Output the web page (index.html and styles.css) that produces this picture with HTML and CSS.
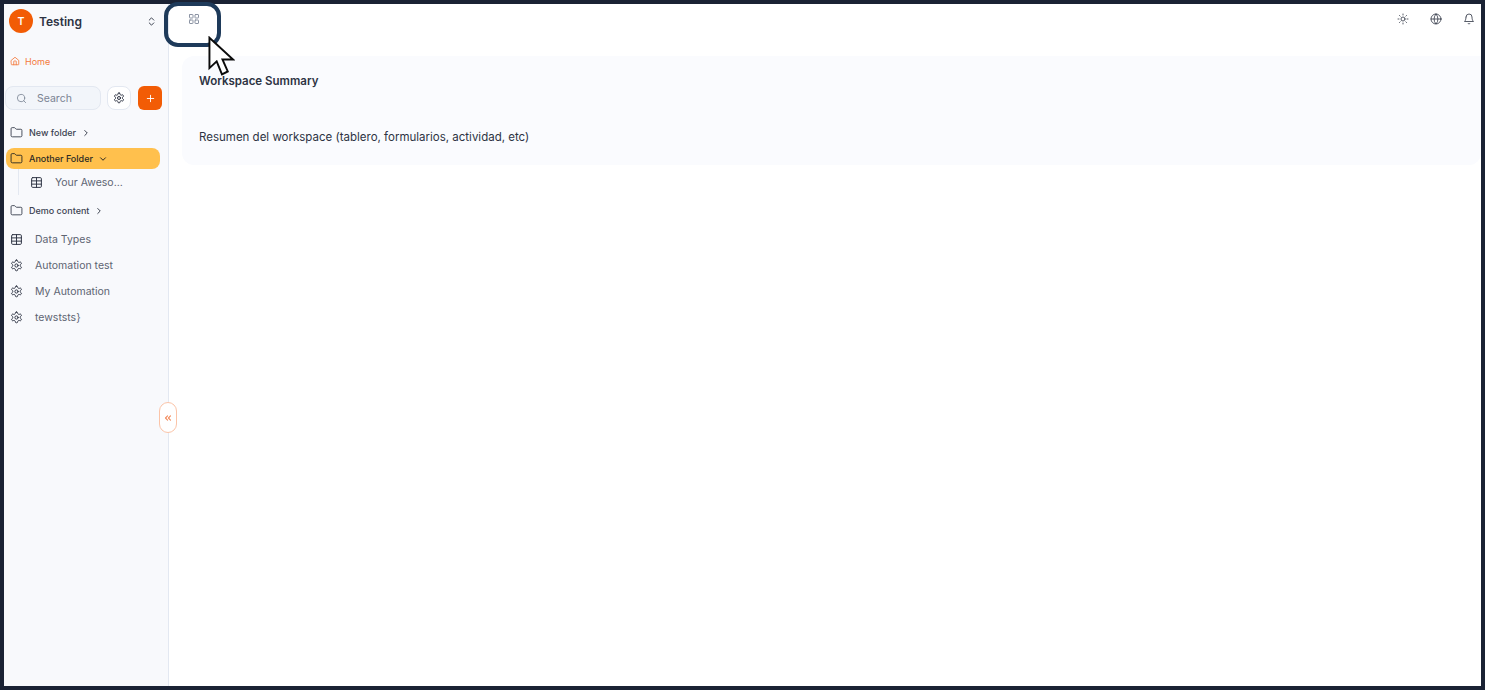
FILE: index.html
```html
<html>
  <head>
    <title>Workspace Summary</title>
    <link rel="stylesheet" href="styles.css">
  </head>
  <body>
    <div class="frame">
      <aside class="sidebar">
        <div class="workspace">
          <span class="avatar">T</span>
          <span class="workspace-name">Testing</span>
          <svg class="switch" viewBox="0 0 24 24"><path d="M7 9l5-5 5 5M7 15l5 5 5-5"/></svg>
        </div>

        <a class="home">
          <svg class="icon-home" viewBox="0 0 24 24"><path d="M3 10.5L12 3l9 7.500V20a1 1 0 0 1-1 1H4a1 1 0 0 1-1-1z"/><path d="M9 21v-8a1 1 0 0 1 1-1h4a1 1 0 0 1 1 1v8"/></svg>
          Home
        </a>

        <div class="tools">
          <div class="search">
            <svg viewBox="0 0 24 24"><circle cx="11" cy="11" r="8"/><path d="M21 21l-4.300-4.300"/></svg>
            <span>Search</span>
          </div>
          <button class="btn-settings">
            <svg viewBox="0 0 24 24"><use href="#gear"/></svg>
          </button>
          <button class="btn-add">
            <svg viewBox="0 0 24 24"><path d="M5 12h14M12 5v14"/></svg>
          </button>
        </div>

        <nav class="tree">
          <div class="folder">
            <svg viewBox="0 0 24 24"><use href="#folder"/></svg>
            <span>New folder</span>
            <svg class="chev" viewBox="0 0 24 24"><path d="M9 6l6 6-6 6"/></svg>
          </div>
          <div class="folder active">
            <svg viewBox="0 0 24 24"><use href="#folder"/></svg>
            <span>Another Folder</span>
            <svg class="chev" viewBox="0 0 24 24"><path d="M6 9l6 6 6-6"/></svg>
          </div>
          <div class="children">
            <div class="item">
              <svg viewBox="0 0 24 24"><use href="#table"/></svg>
              <span>Your Aweso...</span>
            </div>
          </div>
          <div class="folder">
            <svg viewBox="0 0 24 24"><use href="#folder"/></svg>
            <span>Demo content</span>
            <svg class="chev" viewBox="0 0 24 24"><path d="M9 6l6 6-6 6"/></svg>
          </div>
          <div class="item">
            <svg viewBox="0 0 24 24"><use href="#table"/></svg>
            <span>Data Types</span>
          </div>
          <div class="item">
            <svg viewBox="0 0 24 24"><use href="#gear"/></svg>
            <span>Automation test</span>
          </div>
          <div class="item">
            <svg viewBox="0 0 24 24"><use href="#gear"/></svg>
            <span>My Automation</span>
          </div>
          <div class="item">
            <svg viewBox="0 0 24 24"><use href="#gear"/></svg>
            <span>tewststs}</span>
          </div>
        </nav>

        <button class="collapse">
          <svg viewBox="0 0 24 24"><path d="M11 17l-5-5 5-5M18 17l-5-5 5-5"/></svg>
        </button>
      </aside>

      <main class="main">
        <header class="topbar">
          <svg class="grid-icon" viewBox="0 0 24 24">
            <rect x="3" y="3" width="7" height="7" rx="1"/>
            <rect x="14" y="3" width="7" height="7" rx="1"/>
            <rect x="3" y="14" width="7" height="7" rx="1"/>
            <rect x="14" y="14" width="7" height="7" rx="1"/>
          </svg>
          <div class="top-actions">
            <svg viewBox="0 0 24 24"><circle cx="12" cy="12" r="4"/><path d="M12 2v2M12 20v2M4.900 4.900l1.400 1.400M17.700 17.700l1.400 1.400M2 12h2M20 12h2M6.300 17.700l-1.400 1.400M19.100 4.900l-1.400 1.400"/></svg>
            <svg viewBox="0 0 24 24"><circle cx="12" cy="12" r="10"/><path d="M12 2a14.500 14.500 0 0 0 0 20 14.500 14.500 0 0 0 0-20M2 12h20"/></svg>
            <svg viewBox="0 0 24 24"><path d="M6 8a6 6 0 0 1 12 0c0 7 3 9 3 9H3s3-2 3-9"/><path d="M10.300 21a1.900 1.900 0 0 0 3.400 0"/></svg>
          </div>
        </header>

        <section class="summary">
          <h2>Workspace Summary</h2>
          <p>Resumen del workspace (tablero, formularios, actividad, etc)</p>
        </section>
      </main>

      <div class="ring"></div>
      <svg class="cursor" viewBox="0 0 28 44"><path d="M1.500 1.500V33l7.500-7 5.500 13.500 6-3-5.500-12.500H26z"/></svg>
    </div>

    <svg class="defs" width="0" height="0">
      <defs>
        <g id="folder"><path d="M20 20a2 2 0 0 0 2-2V8a2 2 0 0 0-2-2h-7.900a2 2 0 0 1-1.700-.900l-.800-1.200A2 2 0 0 0 7.900 3H4a2 2 0 0 0-2 2v13a2 2 0 0 0 2 2z"/></g>
        <g id="table"><rect x="3" y="3" width="18" height="18" rx="2"/><path d="M12 3v18M3 9h18M3 15h18"/></g>
        <g id="gear"><path d="M12.200 2h-.400a2 2 0 0 0-2 2v.200a2 2 0 0 1-1 1.700l-.400.200a2 2 0 0 1-2 0l-.200-.100a2 2 0 0 0-2.700.700l-.200.400a2 2 0 0 0 .700 2.700l.200.100a2 2 0 0 1 1 1.700v.500a2 2 0 0 1-1 1.700l-.200.100a2 2 0 0 0-.700 2.700l.200.400a2 2 0 0 0 2.700.700l.200-.100a2 2 0 0 1 2 0l.400.200a2 2 0 0 1 1 1.700v.200a2 2 0 0 0 2 2h.400a2 2 0 0 0 2-2v-.200a2 2 0 0 1 1-1.700l.400-.200a2 2 0 0 1 2 0l.200.100a2 2 0 0 0 2.700-.700l.200-.400a2 2 0 0 0-.700-2.700l-.200-.100a2 2 0 0 1-1-1.700v-.500a2 2 0 0 1 1-1.700l.200-.100a2 2 0 0 0 .700-2.700l-.200-.400a2 2 0 0 0-2.700-.700l-.200.100a2 2 0 0 1-2 0l-.400-.200a2 2 0 0 1-1-1.700V4a2 2 0 0 0-2-2z"/><circle cx="12" cy="12" r="3"/></g>
      </defs>
    </svg>
  </body>
</html>
```

FILE: styles.css
```css
:root {
  --dark: #1a2234;
  --text: #2d3343;
  --muted: #5d6472;
  --orange: #f25c05;
  --side: #f8f9fc;
  --line: #e3e8f1;
}

* {
  box-sizing: border-box;
  margin: 0;
  padding: 0;
  font-family: "Inter", "Liberation Sans", sans-serif;
}

body {
  background: var(--dark);
  height: 690px;
  overflow: hidden;
}

svg {
  fill: none;
  stroke: currentColor;
  stroke-width: 2;
  stroke-linecap: round;
  stroke-linejoin: round;
}

.defs {
  display: block;
}

.frame {
  position: relative;
  display: flex;
  height: 682px;
  margin: 4px;
  background: white;
}

.sidebar {
  position: relative;
  flex: 0 0 165px;
  background: var(--side);
  border-right: 1px solid var(--line);
  color: var(--text);
}

.workspace {
  display: flex;
  align-items: center;
  height: 34px;
  margin-top: 0;
  padding: 0 8px 0 5px;
}

.avatar {
  display: flex;
  align-items: center;
  justify-content: center;
  width: 24px;
  height: 24px;
  border-radius: 50%;
  background: var(--orange);
  color: white;
  font-size: 10.500px;
  font-weight: 600;
}

.workspace-name {
  flex: 1;
  margin-left: 6px;
  font-size: 12px;
  font-weight: 600;
}

.switch {
  width: 11px;
  height: 11px;
  margin-right: 3px;
}

.home {
  display: flex;
  align-items: center;
  gap: 5px;
  height: 14px;
  margin: 16px 0 0 6px;
  color: #f47a3c;
  font-size: 9px;
}

.icon-home {
  width: 10px;
  height: 10px;
}

.tools {
  display: flex;
  align-items: center;
  height: 26px;
  margin-top: 17px;
  padding-left: 1px;
}

.search {
  display: flex;
  align-items: center;
  width: 96px;
  height: 24px;
  padding-left: 10px;
  background: #f2f5fa;
  border: 1px solid var(--line);
  border-radius: 8px;
  color: #7b8494;
  font-size: 10.500px;
}

.search svg {
  width: 11px;
  height: 11px;
  margin-right: 10px;
  stroke-width: 1.800;
}

.btn-settings {
  display: flex;
  align-items: center;
  justify-content: center;
  width: 24px;
  height: 24px;
  margin-left: 6px;
  background: white;
  border: 1px solid var(--line);
  border-radius: 8px;
  color: var(--text);
}

.btn-settings svg {
  width: 12px;
  height: 12px;
}

.btn-add {
  display: flex;
  align-items: center;
  justify-content: center;
  width: 24px;
  height: 24px;
  margin-left: 7px;
  background: var(--orange);
  border: none;
  border-radius: 6px;
  color: white;
}

.btn-add svg {
  width: 11px;
  height: 11px;
}

.tree {
  margin-top: 11px;
}

.folder {
  display: flex;
  align-items: center;
  height: 21px;
  margin: 0 8px 5px 2px;
  padding-left: 4px;
  border-radius: 8px;
  color: #3c4351;
  font-size: 9px;
  font-weight: 500;
}

.folder svg {
  flex: none;
  width: 13px;
  height: 13px;
  margin-right: 6px;
  stroke-width: 1.700;
}

.folder .chev {
  width: 10px;
  height: 10px;
  margin: 0 0 0 5px;
  stroke-width: 2.400;
}

.folder.active {
  background: #ffc04d;
  color: #2c2a24;
}

.children {
  margin: -5px 0 5px 14px;
  padding-left: 11px;
  border-left: 1px solid var(--line);
}

.item {
  display: flex;
  align-items: center;
  height: 26px;
  padding-left: 6px;
  color: var(--muted);
  font-size: 10.500px;
}

.children .item {
  padding-left: 0;
}

.item svg {
  flex: none;
  width: 13px;
  height: 13px;
  margin-right: 12px;
  color: var(--text);
  stroke-width: 1.800;
}

.collapse {
  position: absolute;
  top: 398px;
  left: 155px;
  display: flex;
  align-items: center;
  justify-content: center;
  width: 18px;
  height: 31px;
  background: white;
  border: 1.500px solid #fbc4a8;
  border-radius: 9px;
  color: #f28a5c;
}

.collapse svg {
  width: 10px;
  height: 10px;
  stroke-width: 2.600;
}

.main {
  flex: 1;
  min-width: 0;
}

.topbar {
  display: flex;
  align-items: center;
  justify-content: space-between;
  height: 30px;
  padding: 0 6px 0 19px;
  color: var(--text);
}

.grid-icon {
  width: 12px;
  height: 12px;
  color: #8b93a3;
}

.top-actions {
  display: flex;
  align-items: center;
  gap: 21px;
}

.top-actions svg {
  width: 12px;
  height: 12px;
  stroke-width: 1.600;
}

.summary {
  height: 109px;
  margin: 22px 0 0 13px;
  padding: 17px 0 0 17px;
  background: #fafbfe;
  border-radius: 12px 0 12px 12px;
  color: var(--text);
}

.summary h2 {
  font-size: 11.500px;
  font-weight: 600;
  line-height: 16px;
}

.summary p {
  margin-top: 40px;
  font-size: 11.500px;
  line-height: 16px;
}

.ring {
  position: absolute;
  top: -2px;
  left: 160px;
  width: 57px;
  height: 45px;
  border: 4px solid #1e3a5a;
  border-radius: 14px;
}

.cursor {
  position: absolute;
  top: 32px;
  left: 204px;
  width: 27px;
  height: 43px;
  fill: white;
  stroke: #0b0b0b;
  stroke-width: 2;
  stroke-linejoin: miter;
}
```
